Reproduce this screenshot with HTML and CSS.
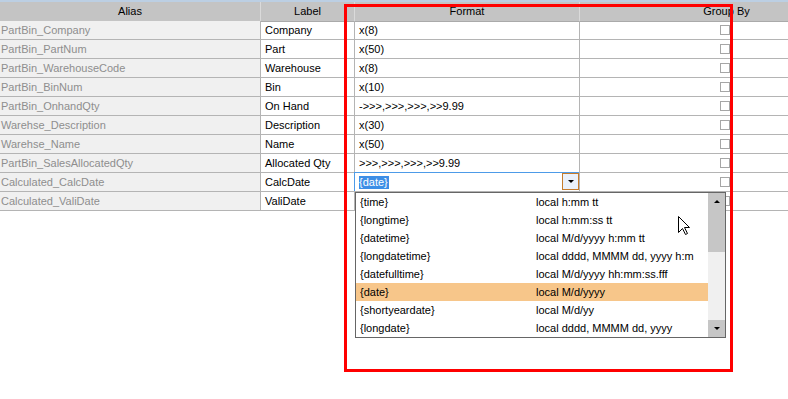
FILE: index.html
```html
<html>
    <head>
        <title>Calculated Fields</title>
        <link rel="stylesheet" href="styles.css">
    </head>
    <body>
        <div class="topline"></div>
        <div class="viewport">
        <div id="fields">
            <div class="head">Alias</div>
            <div class="head">Label</div>
            <div class="head">Format</div>
            <div class="head">Group By</div>

            <div class="alias">PartBin_Company</div>
            <div class="label">Company</div>
            <div class="format">x(8)</div>
            <div class="group"><span class="check"></span></div>

            <div class="alias">PartBin_PartNum</div>
            <div class="label">Part</div>
            <div class="format">x(50)</div>
            <div class="group"><span class="check"></span></div>

            <div class="alias">PartBin_WarehouseCode</div>
            <div class="label">Warehouse</div>
            <div class="format">x(8)</div>
            <div class="group"><span class="check"></span></div>

            <div class="alias">PartBin_BinNum</div>
            <div class="label">Bin</div>
            <div class="format">x(10)</div>
            <div class="group"><span class="check"></span></div>

            <div class="alias">PartBin_OnhandQty</div>
            <div class="label">On Hand</div>
            <div class="format">-&gt;&gt;&gt;,&gt;&gt;&gt;,&gt;&gt;&gt;,&gt;&gt;9.99</div>
            <div class="group"><span class="check"></span></div>

            <div class="alias">Warehse_Description</div>
            <div class="label">Description</div>
            <div class="format">x(30)</div>
            <div class="group"><span class="check"></span></div>

            <div class="alias">Warehse_Name</div>
            <div class="label">Name</div>
            <div class="format">x(50)</div>
            <div class="group"><span class="check"></span></div>

            <div class="alias">PartBin_SalesAllocatedQty</div>
            <div class="label">Allocated Qty</div>
            <div class="format">&gt;&gt;&gt;,&gt;&gt;&gt;,&gt;&gt;&gt;,&gt;&gt;9.99</div>
            <div class="group"><span class="check"></span></div>

            <div class="alias">Calculated_CalcDate</div>
            <div class="label">CalcDate</div>
            <div class="format editing">
                <span class="selected">{date}</span>
                <span class="dropButton"><span class="arrowDown"></span></span>
            </div>
            <div class="group"><span class="check"></span></div>

            <div class="alias">Calculated_ValiDate</div>
            <div class="label">ValiDate</div>
            <div class="format"></div>
            <div class="group"><span class="check"></span></div>
        </div>
        </div>

        <!-- open combo list of the CalcDate format cell -->
        <div class="dropList">
            <div class="items">
                <div class="item"><span>{time}</span><span>local h:mm tt</span></div>
                <div class="item"><span>{longtime}</span><span>local h:mm:ss tt</span></div>
                <div class="item"><span>{datetime}</span><span>local M/d/yyyy h:mm tt</span></div>
                <div class="item"><span>{longdatetime}</span><span>local dddd, MMMM dd, yyyy h:m</span></div>
                <div class="item"><span>{datefulltime}</span><span>local M/d/yyyy hh:mm:ss.fff</span></div>
                <div class="item current"><span>{date}</span><span>local M/d/yyyy</span></div>
                <div class="item"><span>{shortyeardate}</span><span>local M/d/yy</span></div>
                <div class="item"><span>{longdate}</span><span>local dddd, MMMM dd, yyyy</span></div>
            </div>
            <div class="scrollbar">
                <div class="scrollButton"><span class="arrowUp"></span></div>
                <div class="thumb"></div>
                <div class="track"></div>
                <div class="scrollButton"><span class="arrowDown"></span></div>
            </div>
        </div>

        <div class="markBox"></div>

        <svg class="pointer" width="13" height="20" viewBox="0 0 13 20">
            <path d="M0.5 0.5 L0.5 16.5 L4.5 12.5 L7.5 18.5 L9.5 17.5 L6.5 11.5 L11.5 11.5 Z" fill="#fff" stroke="#000" stroke-width="1"/>
        </svg>
    </body>
</html>
```

FILE: styles.css
```css
html, body{
    margin: 0;
    overflow: hidden;
    background: #fff;
    font-family: "Liberation Sans", Arial, sans-serif;
    font-size: 11px;
}
.topline{
    height: 2px;
    background: #bccfe3;
}
.viewport{
    width: 788px;
    overflow: hidden;
}
#fields{
    display: grid;
    grid-template-columns: 261px 94px 225px 294px;
    grid-auto-rows: 19px;
    width: 874px;
}
#fields > div{
    box-sizing: border-box;
    border-right: 1px solid #b4b4b4;
    border-bottom: 1px solid #b4b4b4;
    line-height: 18px;
    white-space: nowrap;
    overflow: hidden;
}
#fields > .head{
    height: 20px;
    line-height: 19px;
    background: #c4c4c4;
    border-right-color: #dadada;
    border-bottom-color: #aaaaaa;
    text-align: center;
    color: #000;
}
.alias{
    background: #f0f0f0;
    color: #8e8e8e;
    padding-left: 1px;
}
.label{
    color: #000;
    padding-left: 4px;
}
.format{
    color: #000;
    padding-left: 4px;
}
.group{
    display: flex;
    align-items: center;
    justify-content: center;
}
.check{
    width: 8px;
    height: 8px;
    border: 1px solid #a6a6a6;
    background: #fff;
    margin-left: -3px;
}
#fields > .editing{
    position: relative;
    overflow: visible;
    display: flex;
    justify-content: space-between;
    align-items: center;
    padding-left: 4px;
}
.editing::after{
    content: "";
    position: absolute;
    left: -1px;
    top: -1px;
    right: 0;
    bottom: 0;
    border: 1px solid #4d9be8;
    border-bottom: none;
    border-right: none;
    pointer-events: none;
}
.selected{
    background: #3d8ee6;
    color: #fff;
    line-height: 13px;
    padding: 0 1px 0 0;
}
.dropButton{
    width: 17px;
    height: 17px;
    box-sizing: border-box;
    border: 1px solid #c67c2c;
    background: #eaf1fb;
    display: flex;
    align-items: center;
    justify-content: center;
    margin-top: -1px;
}
.arrowDown{
    width: 0;
    height: 0;
    border-left: 3px solid transparent;
    border-right: 3px solid transparent;
    border-top: 3px solid #000;
}
.arrowUp{
    width: 0;
    height: 0;
    border-left: 3px solid transparent;
    border-right: 3px solid transparent;
    border-bottom: 3px solid #000;
}
.dropList{
    position: absolute;
    left: 355px;
    top: 192px;
    width: 371px;
    height: 146px;
    box-sizing: border-box;
    border: 1px solid #666;
    background: #fff;
    display: flex;
}
.items{
    flex: 1;
}
.item{
    display: grid;
    grid-template-columns: 176px 166px;
    height: 18px;
    line-height: 18px;
    padding-left: 4px;
    color: #000;
    white-space: nowrap;
}
.item span{
    overflow: hidden;
}
.item.current{
    background: #f7c68a;
}
.scrollbar{
    width: 17px;
    display: flex;
    flex-direction: column;
}
.scrollButton{
    height: 17px;
    background: #c6c6c6;
    display: flex;
    align-items: center;
    justify-content: center;
}
.thumb{
    height: 42px;
    background: #c6c6c6;
}
.track{
    flex: 1;
    background: #f0f0f0;
}
.markBox{
    position: absolute;
    left: 344px;
    top: 4px;
    width: 383px;
    height: 362px;
    border: 3px solid #ff0000;
}
.pointer{
    position: absolute;
    left: 678px;
    top: 216px;
}
```
